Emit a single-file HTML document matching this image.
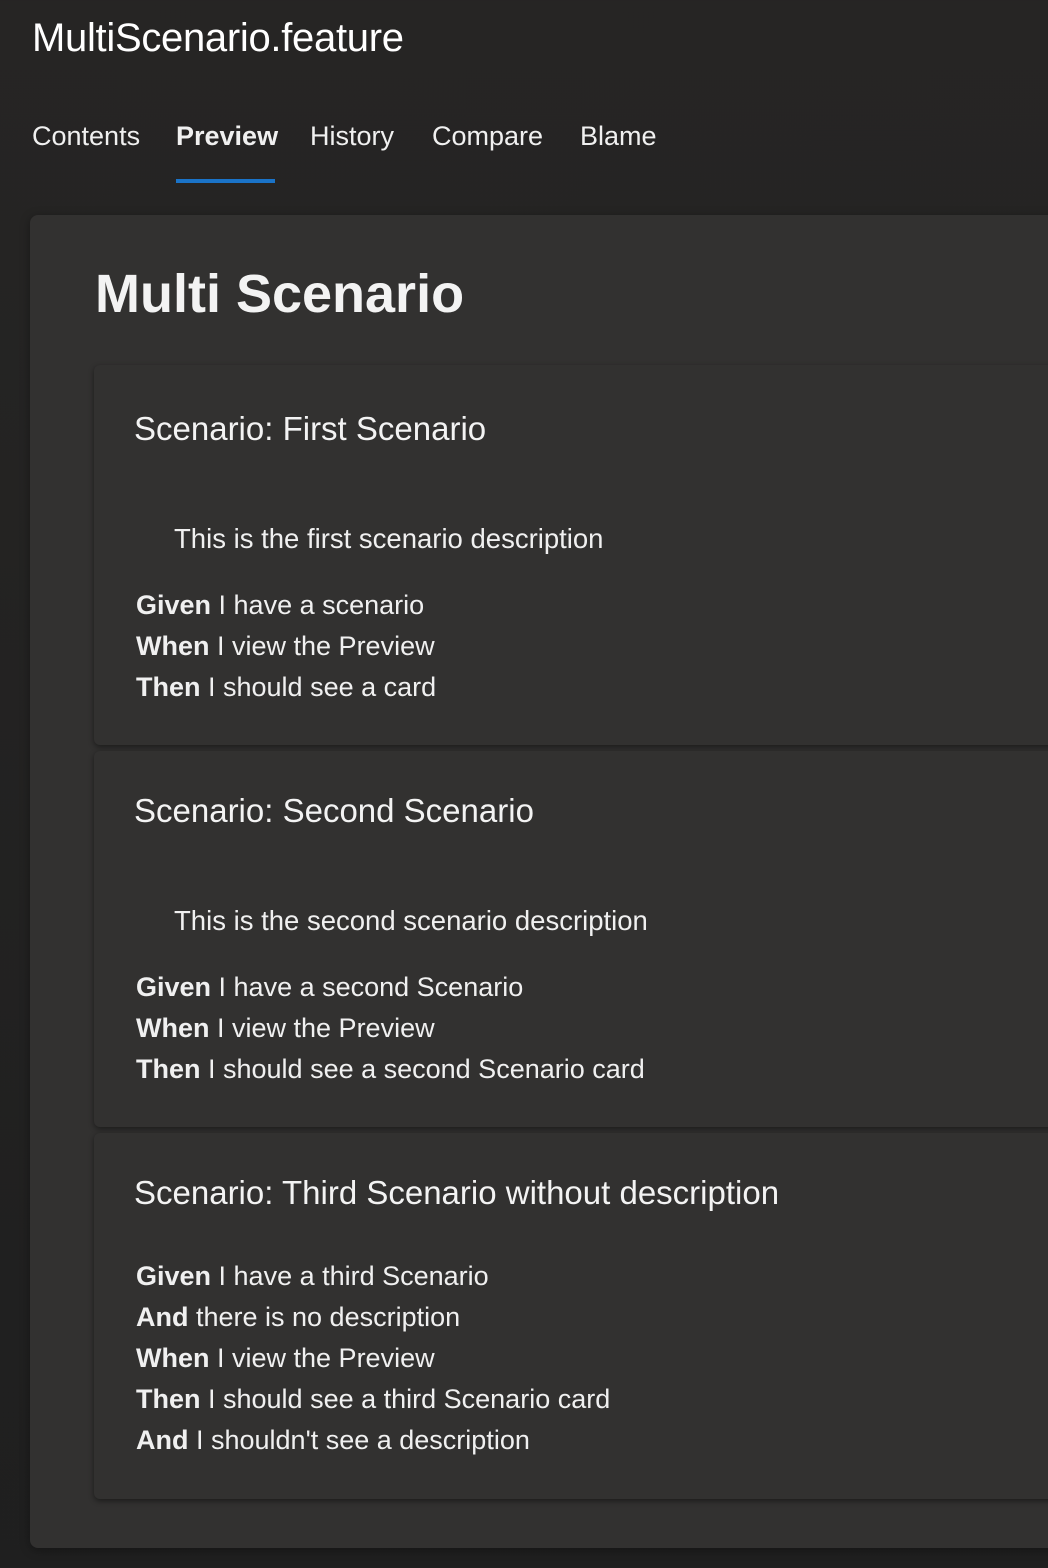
<!DOCTYPE html>
<html><head><style>
html,body{margin:0;padding:0;}
body{width:1048px;height:1568px;background:linear-gradient(#262524,#1f1f1f);font-family:"Liberation Sans",sans-serif;color:#fff;overflow:hidden;position:relative;}
.t{position:absolute;left:32px;top:16px;font-size:40px;letter-spacing:-0.3px;}
.tab{position:absolute;top:121px;font-size:27px;color:#f0f0f0;}
.ul{position:absolute;left:176px;top:179px;width:99px;height:4px;background:#1a73c8;}
.outer{position:absolute;left:30px;top:215px;width:1040px;height:1333px;background:#323130;border-radius:8px;box-shadow:0 2px 10px rgba(0,0,0,.35);}
h1{position:absolute;left:95px;top:263px;margin:0;font-size:54px;font-weight:bold;color:#f3f3f3;}
.c{position:absolute;left:94px;width:980px;background:#323130;border-radius:6px;box-shadow:0 2px 6px rgba(0,0,0,.45);}
.c h2{position:absolute;left:40px;margin:0;font-weight:normal;font-size:33px;color:#f3f3f3;}
.d{position:absolute;left:80px;font-size:27.5px;color:#f0f0f0;}
.s{position:absolute;left:42px;font-size:27px;line-height:41px;color:#f0f0f0;}
b{font-weight:bold;}
</style></head><body>
<div class="t">MultiScenario.feature</div>
<div class="tab" style="left:32px">Contents</div>
<div class="tab" style="left:176px;font-weight:bold">Preview</div>
<div class="tab" style="left:310px">History</div>
<div class="tab" style="left:432px">Compare</div>
<div class="tab" style="left:580px">Blame</div>
<div class="ul"></div>
<div class="outer"></div>
<h1>Multi Scenario</h1>
<div class="c" style="top:365px;height:380px">
<h2 style="top:45px">Scenario: First Scenario</h2>
<div class="d" style="top:158px">This is the first scenario description</div>
<div class="s" style="top:220px"><b>Given</b> I have a scenario<br><b>When</b> I view the Preview<br><b>Then</b> I should see a card</div>
</div>
<div class="c" style="top:751px;height:376px">
<h2 style="top:41px">Scenario: Second Scenario</h2>
<div class="d" style="top:154px">This is the second scenario description</div>
<div class="s" style="top:216px"><b>Given</b> I have a second Scenario<br><b>When</b> I view the Preview<br><b>Then</b> I should see a second Scenario card</div>
</div>
<div class="c" style="top:1133px;height:366px">
<h2 style="top:41px">Scenario: Third Scenario without description</h2>
<div class="s" style="top:123px"><b>Given</b> I have a third Scenario<br><b>And</b> there is no description<br><b>When</b> I view the Preview<br><b>Then</b> I should see a third Scenario card<br><b>And</b> I shouldn't see a description</div>
</div>
</body></html>
